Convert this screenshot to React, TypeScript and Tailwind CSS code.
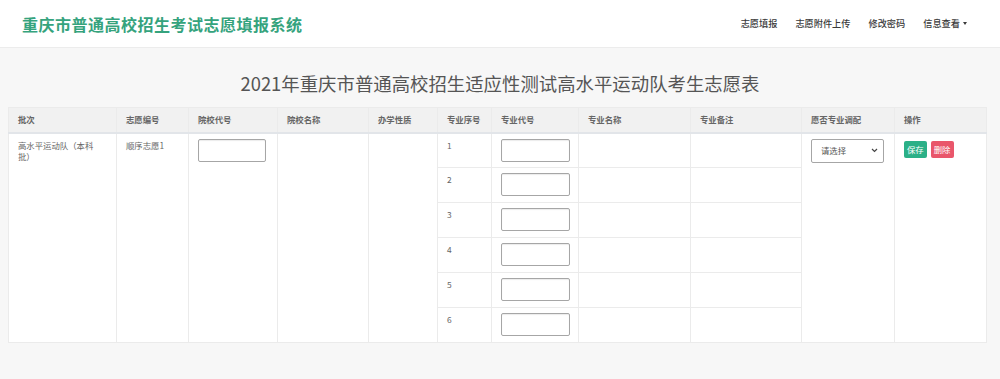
import React from "react";

const cjk = { fontFamily: '"Noto Sans CJK SC", "Liberation Sans", sans-serif' };

const headers = [
  "批次",
  "志愿编号",
  "院校代号",
  "院校名称",
  "办学性质",
  "专业序号",
  "专业代号",
  "专业名称",
  "专业备注",
  "愿否专业调配",
  "操作",
];

const widths = [108, 72, 89, 91, 69, 54, 87, 112, 111, 93, 92];

function TextBox({ w }: { w: string }) {
  return (
    <div className={`${w} h-[23px] bg-white border border-[#a6a6a6] rounded-[2px] shadow-[inset_0_1px_1px_rgba(0,0,0,0.08)]`} />
  );
}

export default function App() {
  const rows = [1, 2, 3, 4, 5, 6];
  const cell = "border border-[#ebebeb] align-top px-[9px] pt-[6px] text-left";

  return (
    <div className="w-[1000px] h-[379px] bg-[#f7f7f7] overflow-hidden" style={cjk}>
      <nav className="h-[48px] bg-white border-b border-[#ececec] flex items-center justify-between pl-[22px] pr-[33px]">
        <div className="text-[16px] font-bold tracking-[0.5px] text-[#35a37d] mt-[1px]">
          重庆市普通高校招生考试志愿填报系统
        </div>
        <ul className="flex items-center gap-[18px] text-[9.2px] text-[#3a3a3a] font-medium">
          <li>志愿填报</li>
          <li>志愿附件上传</li>
          <li>修改密码</li>
          <li className="flex items-center gap-[3px]">
            信息查看
            <span className="inline-block w-0 h-0 border-l-[2.5px] border-r-[2.5px] border-t-[3px] border-l-transparent border-r-transparent border-t-[#3a3a3a]" />
          </li>
        </ul>
      </nav>

      <main className="pt-[22px]">
        <h1 className="text-center text-[18.4px] leading-[27px] text-[#555] mb-[10px]">
          2021年重庆市普通高校招生适应性测试高水平运动队考生志愿表
        </h1>

        <table className="ml-[8px] w-[978px] table-fixed border-collapse bg-white text-[8.4px] leading-[11.7px] text-[#666] border border-[#e6e6e6]">
          <colgroup>
            {widths.map((w, i) => (
              <col key={i} style={{ width: w }} />
            ))}
          </colgroup>
          <thead>
            <tr className="h-[25px] bg-[#f1f1f1]">
              {headers.map((h) => (
                <th
                  key={h}
                  className="border border-[#ebebeb] border-b-2 border-b-[#e2e5e9] px-[9px] text-left align-middle font-bold text-[#666]"
                >
                  {h}
                </th>
              ))}
            </tr>
          </thead>
          <tbody>
            {rows.map((n) => (
              <tr key={n} className="h-[35px]">
                {n === 1 && (
                  <>
                    <td rowSpan={6} className={cell}>
                      <div className="w-[80px]">高水平运动队（本科批）</div>
                    </td>
                    <td rowSpan={6} className={cell}>
                      顺序志愿1
                    </td>
                    <td rowSpan={6} className={`${cell} !pt-[5px]`}>
                      <TextBox w="w-[68px]" />
                    </td>
                    <td rowSpan={6} className={cell}></td>
                    <td rowSpan={6} className={cell}></td>
                  </>
                )}
                <td className={cell}>{n}</td>
                <td className={`${cell} !pt-[5px]`}>
                  <TextBox w="w-[69px]" />
                </td>
                <td className={cell}></td>
                <td className={cell}></td>
                {n === 1 && (
                  <>
                    <td rowSpan={6} className={`${cell} !pt-[5px]`}>
                      <div className="w-[73px] h-[24px] bg-white border border-[#a6a6a6] rounded-[2px] flex items-center justify-between pl-[9px] pr-[5px] text-[8.4px] text-[#555]">
                        <span>请选择</span>
                        <svg width="7" height="5" viewBox="0 0 7 5" fill="none">
                          <path d="M1 1l2.5 2.5L6 1" stroke="#444" strokeWidth="1.2" />
                        </svg>
                      </div>
                    </td>
                    <td rowSpan={6} className={`${cell} !pt-[7px]`}>
                      <div className="flex gap-[4px]">
                        <button className="h-[17px] px-[3px] rounded-[2px] bg-[#2bb087] text-white text-[8.4px] leading-[17px]">
                          保存
                        </button>
                        <button className="h-[17px] px-[3px] rounded-[2px] bg-[#e9566b] text-white text-[8.4px] leading-[17px]">
                          删除
                        </button>
                      </div>
                    </td>
                  </>
                )}
              </tr>
            ))}
          </tbody>
        </table>
      </main>
    </div>
  );
}
